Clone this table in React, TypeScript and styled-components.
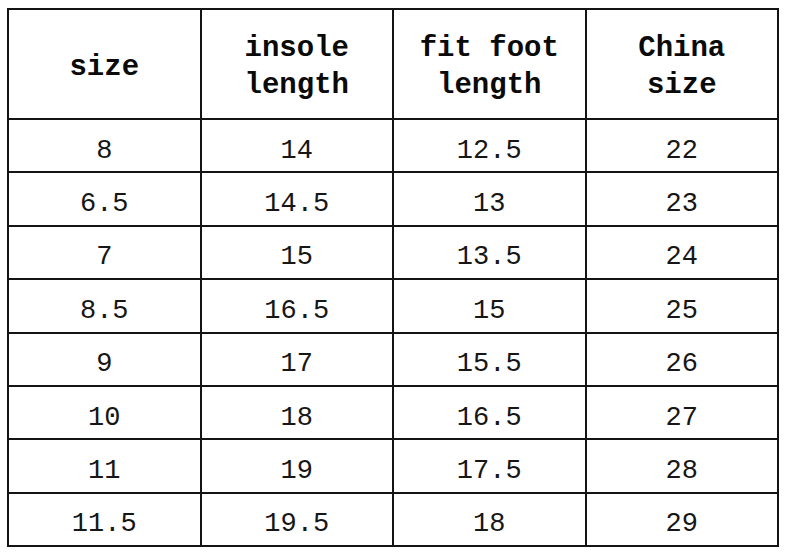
import React from "react"
import styled, { createGlobalStyle } from "styled-components"

const GlobalStyle = createGlobalStyle`
  html, body {
    margin: 0;
    padding: 0;
    background: #ffffff;
  }
  body {
    font-family: "Liberation Mono", "DejaVu Sans Mono", monospace;
  }
`

const headers = [
  ["size"],
  ["insole", "length"],
  ["fit foot", "length"],
  ["China", "size"]
]

const rows = [
  ["8", "14", "12.5", "22"],
  ["6.5", "14.5", "13", "23"],
  ["7", "15", "13.5", "24"],
  ["8.5", "16.5", "15", "25"],
  ["9", "17", "15.5", "26"],
  ["10", "18", "16.5", "27"],
  ["11", "19", "17.5", "28"],
  ["11.5", "19.5", "18", "29"]
]

const App: React.FC = () => {
  return (
    <>
      <GlobalStyle />
      <Sheet>
        <SizeTable>
          <thead>
            <HeadRow>
              {headers.map((lines, i) => (
                <HeadCell key={i}>
                  {lines.map((line, j) => (
                    <HeadLine key={j}>{line}</HeadLine>
                  ))}
                </HeadCell>
              ))}
            </HeadRow>
          </thead>
          <tbody>
            {rows.map((row, i) => (
              <BodyRow key={i}>
                {row.map((value, j) => (
                  <Cell key={j}>{value}</Cell>
                ))}
              </BodyRow>
            ))}
          </tbody>
        </SizeTable>
      </Sheet>
    </>
  )
}

const Sheet = styled.div`
  width: 786px;
  height: 553px;
  box-sizing: border-box;
  padding: 8px 0 0 7px;
  background: #ffffff;
  overflow: hidden;
`

const SizeTable = styled.table`
  width: 772px;
  border-collapse: collapse;
  table-layout: fixed;
  border: 2px solid #141414;
`

const HeadRow = styled.tr`
  height: 110px;
`

const HeadCell = styled.th`
  border: 2px solid #141414;
  padding: 6px 0 0;
  vertical-align: middle;
  text-align: center;
  font-family: "Liberation Mono", "DejaVu Sans Mono", monospace;
  font-size: 29px;
  font-weight: 700;
  line-height: 37px;
  color: #0a0a0a;
`

const HeadLine = styled.div`
  white-space: pre;
`

const BodyRow = styled.tr`
  height: 53.4px;
`

const Cell = styled.td`
  border: 2px solid #141414;
  padding: 10px 0 0;
  vertical-align: middle;
  text-align: center;
  font-family: "Liberation Mono", "DejaVu Sans Mono", monospace;
  font-size: 27px;
  line-height: 30px;
  color: #161616;
`

export default App
